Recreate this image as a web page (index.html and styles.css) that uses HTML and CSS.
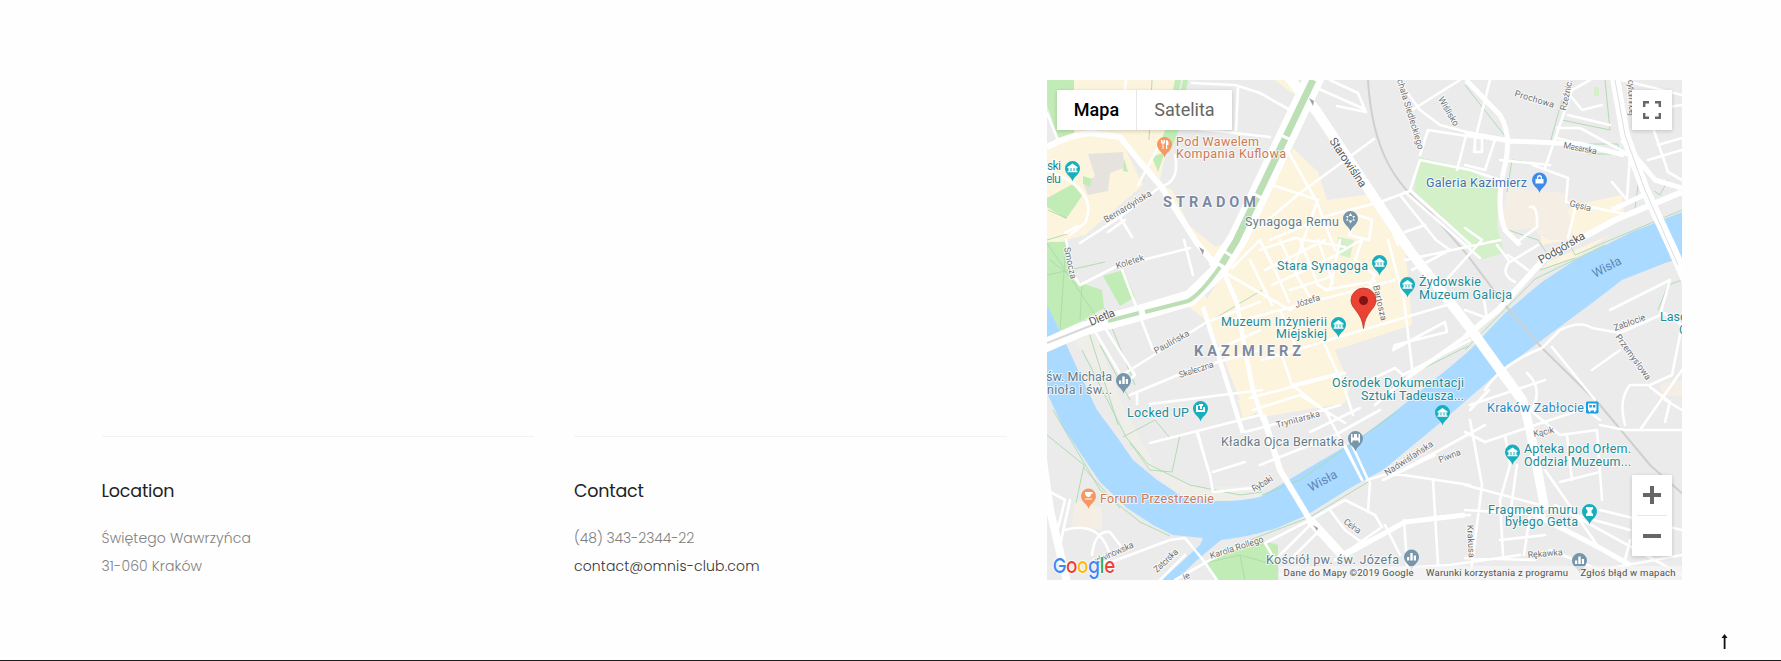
FILE: index.html
```html
<!DOCTYPE html>
<html lang="en">
<head>
<meta charset="utf-8">
<title>Omnis Club – Contact</title>
<link rel="stylesheet" href="styles.css">
</head>
<body>
<main class="page">
  <section class="info">
    <div class="col">
      <h2 class="t-location">Location</h2>
      <p class="t-street">Świętego Wawrzyńca</p>
      <p class="t-city">31-060 Kraków</p>
    </div>
    <div class="col">
      <h2 class="t-contact">Contact</h2>
      <p class="t-phone">(48) 343-2344-22</p>
      <p><a class="t-mail" href="#">contact@omnis-club.com</a></p>
    </div>
  </section>
  <section class="map">
    <svg class="canvas" viewBox="1047 80 635 500" width="635" height="500">
      <defs>
        <g id="pin"><path d="M0 13C-1 8-7.5 6-7.5 0A7.5 7.5 0 0 1 7.5 0C7.5 6 1 8 0 13Z"/></g>
        <g id="museum" fill="#fff"><path d="M-5-1L0-4.500L5-1V0H-5Z"/><path d="M-4 0h2v3h-2zM-1 0h2v3h-2zM2 0h2v3h-2zM-5 3h10v1.300h-10z"/></g>
        <g id="bars" fill="#fff"><path d="M-4.500 0h2.200v3.500h-2.200zM-1.200-4h2.400v7.500h-2.400zM2.300-1.500h2.200v5h-2.200z"/></g>
      </defs>
      <rect x="1047" y="80" width="635" height="500" fill="#ebebeb"/>
      <!-- built-up and commercial areas -->
      <g fill="#fdf4dd">
        <path d="M1073 80H1180L1170 130 1160 180 1143 162 1122 142 1143 185 1120 205 1085 235 1047 245V145L1058 138Z"/>
        <path d="M1160 185L1172 190 1189 225 1215 247 1235 240 1228 262 1212 266Z"/>
        <path d="M1275 80H1295L1305 98 1290 92Z"/>
        <path d="M1293 148L1318 172 1327 200 1373 194 1380 205 1405 245 1410 300 1412 325 1335 350 1350 387 1345 403 1262 417 1240 400 1203 306 1240 245 1262 205Z"/>
        <path d="M1183 303l18-12 12 14-8 14z"/>
        <path d="M1238 400l22-5v16l-17 8z"/>
        <path d="M1574 205L1622 195 1624 212 1585 236 1542 245 1540 232Z"/>
        <path d="M1548 262L1610 235 1574 258 1540 270Z"/>
      </g>
      <g fill="#f5eee5">
        <path d="M1508 188L1565 193 1574 240 1548 240 1530 228 1508 231 1502 215Z"/>
        <path d="M1075 500l27 8v22l-30-5zM1660 383l22-2v16l-20-2z"/>
      </g>
      <path fill="#e6e3df" d="M1088 154l35-2 1 16-14 5-2 18-20 4-4-9 11-10z"/>
      <path fill="#efeee8" d="M1062 325l28-5 35 90 32 60 45 18 60-3-3 17-40 6-40-10-45-45-35-80z"/>
      <!-- parks -->
      <g fill="#c2ecb5">
        <path d="M1047 80H1074V133L1058 138 1047 105Z"/>
        <path d="M1047 198l26-14 9 12-16 23-19-12z"/>
        <path d="M1083 176l9 3-2 8-7-3zM1124 158l4 14-5-1zM1152 157l13-5-7 20z"/>
        <path d="M1166 127h14l-11 26-9-8z"/>
        <path d="M1047 242L1066 242 1073 280 1102 290 1104 308 1070 328 1062 333 1047 308Z"/>
        <path d="M1103 276l20-6 12 27-15 9z"/>
        <path d="M1225 548L1262 540 1278 545V580H1217L1203 563Z"/>
        <path d="M1175 80h6l-2 10h-6zM1183 80h5l-2 10h-5z"/>
      </g>
      <path fill="#d3f0c9" d="M1419 157L1470 169 1500 190 1497 225 1504 253 1480 260 1462 235 1414 191Z"/>
      <path fill="#d3f0c9" d="M1338 237l16 3-4 18-13-4zM1594 87h5v9h-5z"/>
      <!-- river -->
      <path fill="#aadaff" d="M1047 305L1062 335 1078 370 1097 410 1117 437 1133 460 1157 480 1180 495Q1220 506 1260 497L1280 485 1317 463 1360 438 1397 410 1450 367 1470 350 1505 313 1542 282 1575 260 1632 232 1682 212V258L1665 263 1622 280 1592 303 1542 340 1498 373 1440 423 1383 470 1350 488 1307 515 1277 528Q1250 537 1221 540L1196 561 1176 580H1162L1200 545 1203 538 1173 535 1153 525 1127 508 1100 482 1083 457 1063 427 1047 393Z"/>
      <!-- footpaths -->
      <g class="paths">
        <path d="M1047 243L1100 322M1050 260L1082 285 1080 320M1047 275L1105 262M1066 243L1060 330M1085 320L1118 425M1104 308L1135 385M1082 350L1126 437 1148 464 1190 485 1240 495 1262 492"/>
        <path d="M1100 345L1130 400M1123 437L1155 420 1170 438M1130 443L1150 470 1172 472 1180 435M1047 435L1084 465 1076 503M1053 410L1100 490 1140 522 1170 536M1083 467L1120 508"/>
        <path d="M1262 495L1300 480 1397 412M1250 540L1310 517 1368 482M1465 350L1535 279 1605 245M1404 378L1468 346"/>
        <path d="M1465 85L1508 140 1550 143 1562 100M1562 120L1610 130 1605 80M1507 192L1512 160 1535 163M1588 144h30v10h-30zM1640 170l-5 38M1668 180l-8 15-6-4M1682 210L1575 255 1570 245M1540 270l35-12M1508 230l30 10 8 12M1658 310l10-25 14-5"/>
        <path d="M1048 210l18 8M1047 240l20-6M1152 80l-3 60M1262 290L1204 325M1205 563l35-8 35 10M1240 555l5 25"/>
      </g>
      <!-- railway -->
      <path class="rail" d="M1368 80C1372 150 1395 185 1430 212L1465 252 1505 305 1541 347 1600 405 1650 465 1684 495"/>
      <!-- side streets -->
      <g class="minor">
        <path d="M1047 113L1058 140M1078 226L1065 233M1080 243L1120 217 1160 187M1047 170Q1100 190 1085 223L1070 235M1120 217L1132 237M1125 220L1108 232M1162 140L1138 185M1175 155Q1180 180 1163 186M1126 80L1124 98"/>
        <path d="M1192 83L1235 85 1260 93 1290 110M1238 88L1236 130M1190 128L1270 137M1310 85L1362 108 1366 112 1337 106M1330 80L1358 93 1365 110"/>
        <path d="M1374 139L1300 193 1262 225M1289 153L1317 202 1335 250M1272 185L1318 200M1317 202L1300 250 1295 262M1410 191L1380 202 1330 215 1270 240M1383 208L1398 245M1400 195L1436 240 1450 250M1405 232L1425 225M1358 215l14 5-3 20-20-5z"/>
        <path d="M1398 80L1420 110 1440 125 1467 132M1412 110L1460 80M1420 155L1428 130 1480 138M1467 132L1457 170M1420 160L1470 170 1500 180M1420 160L1410 190 1470 244M1405 192L1480 258M1475 140L1490 80M1475 142l-1 10M1465 132L1495 140 1485 170 1465 165M1475 136v16h7v-15"/>
        <path d="M1590 80L1572 90 1545 168M1570 95L1582 110 1602 105M1557 128L1580 128 1615 147 1630 155M1568 115L1610 125M1557 138L1618 154 1630 155 1627 200 1612 182M1533 165L1568 178 1566 202 1625 214M1550 165L1500 160M1576 205L1568 238M1530 207q8-2 7 20l-20 15M1658 145L1682 138M1650 110L1682 105M1648 113L1668 172 1682 180M1648 160L1682 150M1622 80L1682 95"/>
        <path d="M1066 240L1073 275 1080 285 1115 267 1190 248M1122 270L1153 350M1184 240L1193 275M1103 325L1135 375 1123 385M1090 323L1119 372 1122 385M1122 375L1170 345 1207 322 1260 302M1130 395L1190 370 1260 350M1137 392v12M1150 404L1262 390M1217 350L1260 330"/>
        <path d="M1220 270L1290 310 1305 300M1250 318L1395 280M1232 268L1260 240M1250 260L1272 305M1260 240L1275 270 1289 302M1280 240L1297 276 1310 297M1300 240L1318 285 1327 290M1318 240L1333 283M1340 240L1330 290M1272 285L1327 260 1361 240M1265 270L1325 240M1290 290L1333 276M1325 290L1375 281M1260 250L1295 238 1345 247M1362 240L1355 260 1375 275 1370 284M1388 240L1404 300 1413 375M1280 310L1295 345M1262 360L1450 304"/>
        <path d="M1282 356L1292 385 1340 373M1325 345L1345 390 1353 415M1250 398L1345 373M1292 385L1330 415M1253 410L1300 395 1345 423M1393 350L1445 322 1447 332 1395 345zM1360 385L1395 368 1403 375 1470 340M1410 375L1375 405M1465 310L1487 318 1484 300M1440 287L1482 240 1465 228M1405 260L1500 240M1412 270L1450 250"/>
        <path d="M1509 262Q1500 275 1515 282M1508 255L1528 270M1497 245L1510 262 1538 245M1485 390Q1500 365 1542 348L1560 330Q1580 320 1592 328L1620 333 1665 313M1552 347L1595 400M1527 373Q1545 390 1530 412M1489 390L1470 410M1592 370L1620 350M1610 310L1640 295 1670 280 1660 315M1665 314L1682 325 1672 375 1650 385 1630 385Q1618 400 1625 425M1650 387L1670 402 1665 422"/>
        <path d="M1150 443L1260 415M1197 433L1210 475 1213 492 1262 487M1213 472L1245 462M1198 433L1208 470M1245 432L1290 420 1340 405M1260 465L1335 435 1380 410M1325 410L1362 480M1310 432L1360 408"/>
        <path d="M1383 480L1440 450 1485 425M1367 480L1390 473 1470 485M1370 482L1368 512M1383 480L1435 455M1433 480L1438 565M1345 500L1375 515 1382 527 1335 560M1310 520L1345 500M1330 510L1345 530 1365 545M1385 525L1400 555M1404 520L1407 565M1265 543L1310 520M1265 543L1275 560 1310 525M1290 560L1320 530"/>
        <path d="M1250 541L1210 560 1175 580M1103 565L1170 540 1185 538 1203 560 1217 580M1047 490L1065 500 1055 540M1070 500L1060 545M1065 530Q1100 520 1110 555L1095 580M1092 555Q1095 530 1110 532L1120 545M1160 580L1185 555"/>
        <path d="M1470 405L1500 395 1545 380M1465 432L1485 442 1580 410M1470 420L1482 485 1470 580M1465 485L1540 505 1630 530M1505 435L1510 465 1500 500 1503 555M1530 410L1560 435 1597 430 1602 500M1567 435L1572 480M1560 482L1600 472M1545 470L1597 545M1517 465L1510 515M1465 510L1545 515M1530 515L1524 555M1600 510L1682 530M1465 558L1535 560M1555 505L1682 575M1500 540L1545 535M1600 425L1625 430 1682 430M1665 400L1682 410"/>
        <path d="M1343 553L1400 525Q1430 515 1470 515M1280 575L1450 565 1520 555M1550 550L1600 570 1682 555M1600 420L1580 405M1630 540L1620 580M1640 430L1682 370"/>
      </g>
      <!-- main streets -->
      <g class="road">
        <path stroke-width="6" d="M1047 147Q1070 135 1090 133L1120 137 1140 162 1160 185 1197 243 1216 266"/>
        <path stroke-width="20" d="M1315 76L1237 240 1217 270"/>
        <path stroke-width="16" stroke-linejoin="round" d="M1237 240L1217 272 1190 298 1143 312 1107 322"/>
        <path stroke-width="14" d="M1110 321L1080 330 1044 346"/>
        <path stroke-width="6" d="M1682 192L1615 220 1582 238 1545 258 1528 277 1498 310 1465 337"/>
        <path stroke-width="4" d="M1465 337L1407 378"/>
        <path stroke-width="5" d="M1466 80L1500 115Q1512 135 1505 165 1495 205 1505 230L1520 245M1465 133L1510 141 1580 144 1624 155"/>
        <path stroke-width="10" d="M1287 75L1317 112 1361 178 1410 251 1470 328 1522 400"/>
        <path stroke-width="9" d="M1522 398L1530 430 1545 510"/>
        <path stroke-width="10" d="M1615 78L1625 135 1645 190 1672 248 1686 280"/>
        <path stroke-width="5" d="M1622 140L1655 180 1682 188M1644 195L1612 210"/>
        <path stroke-width="4.500" d="M1224 273L1237 303 1245 350 1253 390 1263 420M1203 307L1227 383 1243 433"/>
        <path stroke-width="6" d="M1263 415L1280 470 1310 520"/>
        <path stroke-width="9" d="M1310 520L1342 555"/>
        <path stroke-width="8" d="M1043 460L1050 510 1067 582"/>
        <path stroke-width="5" d="M1530 512L1600 548 1630 565M1345 555L1405 522 1465 515"/>
        <path stroke-width="2.500" d="M1345 445L1362 480M1352 445L1368 480"/>
      </g>
      <g fill="none" stroke="#bcdfb5">
        <path stroke-width="7" stroke-dasharray="62 3" d="M1313 80L1236 241 1222 264"/>
        <path stroke-width="4" d="M1220 267Q1200 295 1188 301L1145 312M1139 313L1108 321"/>
      </g>
      <path fill="none" stroke="#d8d8d8" stroke-width="2" d="M1047 343L1095 324"/>
      <path fill="none" stroke="#dedede" stroke-width="1" d="M1615 80L1625 135 1645 190 1678 265"/>
      <g fill="#a0a0a0"><path d="M1309 98l5 3-1 5zM1199 247l5 3-1 5zM1313 525l5 3-1 3z"/></g>

      <!-- street names -->
      <g class="street">
        <text transform="translate(1106 223) rotate(-31)" textLength="54">Bernardyńska</text>
        <text transform="translate(1117 269) rotate(-18)" textLength="29">Koletek</text>
        <text transform="translate(1064 248) rotate(78)" textLength="32">Smocza</text>
        <text class="big" transform="translate(1091 326) rotate(-23)" textLength="27">Dietla</text>
        <text transform="translate(1156 354) rotate(-29)" textLength="39">Paulińska</text>
        <text transform="translate(1180 378) rotate(-18)" textLength="36">Skałeczna</text>
        <text class="big" transform="translate(1329 141) rotate(56)" textLength="57">Starowiślna</text>
        <text transform="translate(1397 80) rotate(73)" textLength="73">chała Siedleckiego</text>
        <text transform="translate(1438 99) rotate(60)" textLength="32">Wiślisko</text>
        <text transform="translate(1514 96) rotate(17)" textLength="41">Prochowa</text>
        <text transform="translate(1566 111) rotate(-78)" textLength="31">Rzeźnic.</text>
        <text transform="translate(1628 80) rotate(88)" textLength="36">cytłumnoej</text>
        <text transform="translate(1563 148) rotate(11)" textLength="34">Masarska</text>
        <text transform="translate(1569 206) rotate(14)" textLength="22">Gęsia</text>
        <text class="big" transform="translate(1541 264) rotate(-30)" textLength="52">Podgórska</text>
        <text transform="translate(1296 308) rotate(-18)" textLength="26">Józefa</text>
        <text transform="translate(1373 286) rotate(77)" textLength="36">Bartosza</text>
        <text transform="translate(1615 331) rotate(-20)" textLength="33">Zabłocie</text>
        <text transform="translate(1615 337) rotate(54)" textLength="54">Przemysłowa</text>
        <text transform="translate(1277 428) rotate(-15)" textLength="45">Trynitarska</text>
        <text transform="translate(1254 492) rotate(-31)" textLength="23">Rybaki</text>
        <text transform="translate(1387 476) rotate(-33)" textLength="56">Nadwiślańska</text>
        <text transform="translate(1440 463) rotate(-22)" textLength="23">Piwna</text>
        <text transform="translate(1343 523) rotate(36)" textLength="19">Celna</text>
        <text transform="translate(1534 437) rotate(-12)" textLength="21">Kącik</text>
        <text transform="translate(1467 525) rotate(87)" textLength="33">Krakusa</text>
        <text transform="translate(1528 558) rotate(-5)" textLength="35">Rękawka</text>
        <text transform="translate(1094 565) rotate(-24)" textLength="44">udwinowska</text>
        <text transform="translate(1157 573) rotate(-43)" textLength="30">Zatorska</text>
        <text transform="translate(1211 559) rotate(-18)" textLength="56">Karola Rollego</text>
        <text transform="translate(1184 580) rotate(-20)">ie</text>
      </g>
      <g class="water">
        <text transform="translate(1595 278) rotate(-28)" textLength="31">Wisła</text>
        <text transform="translate(1311 492) rotate(-29)" textLength="31">Wisła</text>
      </g>
      <g class="district">
        <text x="1163" y="207" textLength="93">STRADOM</text>
        <text x="1194" y="356" textLength="107">KAZIMIERZ</text>
      </g>

      <!-- place markers -->
      <g class="poi food">
        <use href="#pin" transform="translate(1164.500 144.500)"/><path class="glyph" d="M1161 140v3l1.500 1v5h1v-5l1.500-1v-3h-1v2.500h-.5V140h-1v2.500h-.5V140zM1166 149v-9q3 0 2.500 5h-1.300v4z"/>
        <text x="1176" y="145.500" textLength="83">Pod Wawelem</text><text x="1176" y="158" textLength="110">Kompania Kuflowa</text>
        <use href="#pin" transform="translate(1088.500 496)"/><path class="glyph" d="M1085 492h7.500v2h-1.500q0 3-2.500 3t-3.500-3zM1085 498.500h7v1h-7z"/>
        <text x="1100" y="503" textLength="114">Forum Przestrzenie</text>
      </g>
      <g class="poi teal">
        <text x="1047" y="170" textLength="14">ski</text><text x="1046" y="183" textLength="15">elu</text>
        <use href="#pin" transform="translate(1072.500 168.500)"/><use href="#museum" x="1072.500" y="168"/>
        <text x="1277" y="270" textLength="91">Stara Synagoga</text>
        <use href="#pin" transform="translate(1379.500 262.500)"/><use href="#museum" x="1379.500" y="262.500"/>
        <text x="1419" y="285.500" textLength="62">Żydowskie</text><text x="1419" y="298.500" textLength="93">Muzeum Galicja</text>
        <use href="#pin" transform="translate(1407.500 284.500)"/><use href="#museum" x="1407.500" y="284.500"/>
        <text x="1221" y="325.500" textLength="106">Muzeum Inżynierii</text><text x="1276" y="338" textLength="51">Miejskiej</text>
        <use href="#pin" transform="translate(1338.500 324.500)"/><use href="#museum" x="1338.500" y="324.500"/>
        <text x="1332" y="386.500" textLength="132">Ośrodek Dokumentacji</text><text x="1361" y="399.500" textLength="103">Sztuki Tadeusza...</text>
        <use href="#pin" transform="translate(1442.500 412.500)"/><use href="#museum" x="1442.500" y="412.500"/>
        <text x="1127" y="416.500" textLength="62">Locked UP</text>
        <use href="#pin" transform="translate(1200.500 408.500)"/><path class="glyph" d="M1196 411v-6h3v-1h4v2h-5v4h5v-3h2v5h-9zM1200 406h2v3h-2z"/>
        <text x="1524" y="453" textLength="107">Apteka pod Orłem.</text><text x="1524" y="466" textLength="107">Oddział Muzeum...</text>
        <use href="#pin" transform="translate(1512.500 452)"/><use href="#museum" x="1512.500" y="452"/>
        <text x="1488" y="513.500" textLength="90">Fragment muru</text><text x="1505" y="526" textLength="73">byłego Getta</text>
        <use href="#pin" transform="translate(1589.500 511.500)"/><path class="glyph" d="M1586 507h7v2l-1.500 1.500v2l1.500 1.500v2h-7v-2l1.500-1.500v-2L1586 509z"/>
        <text x="1660" y="321">Lasc</text><text x="1679" y="334">C</text>
      </g>
      <g class="poi slate">
        <text x="1245" y="226" textLength="94">Synagoga Remu</text>
        <use href="#pin" transform="translate(1350.500 218.500)"/><path class="glyph" d="M1350.500 213l4.500 7.500h-9zM1350.500 223.500l4.500-7.500h-9z"/><circle cx="1350.500" cy="218.300" r="1.200"/>
        <text x="1046" y="381" textLength="66">św. Michała</text><text x="1040" y="394" textLength="72">anioła i św...</text>
        <use href="#pin" transform="translate(1123.500 380.500)"/><use href="#bars" x="1123.500" y="380.500"/>
        <text x="1221" y="446" textLength="123">Kładka Ojca Bernatka</text>
        <use href="#pin" transform="translate(1355.500 438.500)"/><path class="glyph" d="M1351 434h1.500v3.500h1.500V434h3v3.500h1.500V434h1.500v8.500h-1.500v-2h-6v2h-1.500z"/>
        <text x="1266" y="564" textLength="133">Kościół pw. św. Józefa</text>
        <use href="#pin" transform="translate(1411.500 557)"/><use href="#bars" x="1411.500" y="557"/>
        <use href="#pin" transform="translate(1579.500 560.500)"/><use href="#bars" x="1579.500" y="560.500"/>
      </g>
      <g class="poi shop">
        <text x="1426" y="187" textLength="101">Galeria Kazimierz</text>
        <use href="#pin" transform="translate(1539.500 180)"/><path class="glyph" d="M1535.500 179h1.500v-1q0-3 2.500-3t2.500 3v1h1.500v4.500h-8zM1538.200 179h2.600v-1q0-1.500-1.300-1.500t-1.300 1.500z" fill-rule="evenodd"/>
      </g>
      <g class="poi station">
        <text x="1487" y="412" textLength="97">Kraków Zabłocie</text>
        <rect x="1586" y="401.500" width="12.500" height="12" rx="1.500"/><path class="glyph" d="M1588 403.500h8.500v7h-1v1.500h-1.500v-1.500h-3.500v1.500h-1.500v-1.500h-1z"/><path d="M1589.300 405h2.500v2.500h-2.500zM1592.900 405h2.500v2.500h-2.500z"/>
      </g>
      <path fill="#ea4335" stroke="#b8352a" stroke-width=".8" d="M1363.500 328.500C1362 312 1351 309 1351 300.500A12.500 12.500 0 0 1 1376 300.500C1376 309 1365 312 1363.500 328.500Z"/>
      <circle cx="1363.500" cy="300.500" r="4.500" fill="#811411"/>
      <rect x="1279" y="566" width="403" height="14" fill="#f5f5f5" opacity=".75"/>
      <text class="logo" x="1053" y="573" textLength="62" lengthAdjust="spacingAndGlyphs"><tspan fill="#4285f4">G</tspan><tspan fill="#ea4335">o</tspan><tspan fill="#fbbc05">o</tspan><tspan fill="#4285f4">g</tspan><tspan fill="#34a853">l</tspan><tspan fill="#ea4335">e</tspan></text>
      <g class="legal">
        <text x="1283.500" y="576" textLength="130">Dane do Mapy ©2019 Google</text>
        <text x="1426" y="576" textLength="142">Warunki korzystania z programu</text>
        <text x="1580.500" y="576" textLength="95">Zgłoś błąd w mapach</text>
      </g>
    </svg>
    <div class="types"><button class="active">Mapa</button><button>Satelita</button></div>
    <button class="full" aria-label="Fullscreen"><svg width="18" height="18" viewBox="0 0 18 18"><path d="M1.200 6V1.200H6M12 1.200h4.800V6M16.800 12v4.800H12M6 16.800H1.200V12" fill="none" stroke="#666" stroke-width="2.400"/></svg></button>
    <div class="zoom"><button aria-label="Zoom in"><svg width="18" height="18"><path d="M0 9h18M9 0v18" stroke="#666" stroke-width="4"/></svg></button><i></i><button aria-label="Zoom out"><svg width="18" height="18"><path d="M0 9h18" stroke="#666" stroke-width="4"/></svg></button></div>
  </section>
  <a class="top" href="#" aria-label="Back to top"><svg width="7" height="15" viewBox="0 0 7 15"><path d="M2.700 3h1.800v12H2.700z"/><path d="M.5 4L3.600 0 6.500 4Z"/></svg></a>
</main>
</body>
</html>
```
FILE: styles.css
```css
* { box-sizing: border-box; }
body { margin: 0; background: #fefefe; font-family: Poppins, Inter, sans-serif; }
.page { position: relative; display: flex; height: 661px; padding: 80px 99px 0 102px; border-bottom: 1px solid #1c1c1c; overflow: hidden; }
.info { display: flex; align-items: flex-start; flex: 1; gap: 40px; padding-top: 356px; }
.col { width: 432px; border-top: 1px solid #f1f1f1; padding-top: 42px; }
.col + .col { width: 433px; }
h2 { margin: 0 0 21px; font-size: 17.5px; line-height: 24px; font-weight: 400; letter-spacing: -0.2px; color: #222; }
p { margin: 0; font-size: 14px; line-height: 28px; font-weight: 300; color: #808080; white-space: nowrap; }
a { color: #333; text-decoration: none; }
.t-location { margin-left: -0.5px; }
.t-street, .t-city { margin-left: -0.5px; letter-spacing: 0.12px; }
.t-phone { letter-spacing: -0.1px; }
.t-mail { letter-spacing: 0.13px; }
.map { position: relative; width: 635px; height: 500px; flex: none; overflow: hidden; font-family: Roboto, sans-serif; }
.canvas { display: block; }
.paths { fill: none; stroke: #a9d9ae; stroke-width: 0.9; }
.rail { fill: none; stroke: #cfcfcf; stroke-width: 2; }
.minor { fill: none; stroke: #fff; stroke-width: 2.6; stroke-linejoin: round; stroke-linecap: round; }
.road { fill: none; stroke: #fff; stroke-linejoin: round; }
.canvas text { paint-order: stroke; stroke: #ffffffb8; stroke-width: 2px; stroke-linejoin: round; }
.street text { font-size: 9px; fill: #707070; }
.street .big { font-size: 11.5px; fill: #5a5a5a; }
.water text { font-size: 12.5px; fill: #5a86ba; stroke: none; }
.district text { font-size: 14.5px; font-weight: 700; fill: #7b89a1; }
.poi text { font-size: 12.5px; }
.poi .glyph { fill: #fff; }
.food { fill: #f79862; }
.food text { fill: #cb7a56; }
.teal { fill: #17afbd; }
.teal text { fill: #218b96; }
.slate { fill: #7796aa; }
.slate text { fill: #647d8b; }
.shop { fill: #3f8bea; }
.shop text { fill: #4670b0; }
.station { fill: #159fe6; }
.station text { fill: #1f8dc0; }
.canvas .logo { font-family: Poppins, Lato, sans-serif; font-size: 21px; font-weight: 500; stroke: #fff; stroke-width: 1.5px; }
.canvas .legal text { font-size: 9.5px; fill: #505050; stroke: none; }
button { border: 0; padding: 0; background: #fff; font-family: Roboto, sans-serif; }
.types { position: absolute; left: 10px; top: 10px; display: flex; height: 40px; box-shadow: 0 1px 4px #0000002e; }
.types button { width: 95px; padding-bottom: 1px; font-size: 18px; color: #666; }
.types .active { width: 80px; font-weight: 500; color: #000; border-right: 1px solid #e8e8e8; }
.full { position: absolute; right: 10px; top: 10px; width: 40px; height: 40px; display: grid; place-items: center; box-shadow: 0 1px 4px #0000002e; }
.zoom { position: absolute; right: 10px; top: 395px; width: 40px; height: 81px; display: flex; flex-direction: column; align-items: center; background: #fff; box-shadow: 0 1px 4px #0000002e; }
.zoom button { width: 40px; height: 40px; display: grid; place-items: center; }
.zoom i { width: 30px; height: 1px; background: #e6e6e6; }
.top { position: absolute; left: 1721px; top: 634px; line-height: 0; fill: #111; }
```
